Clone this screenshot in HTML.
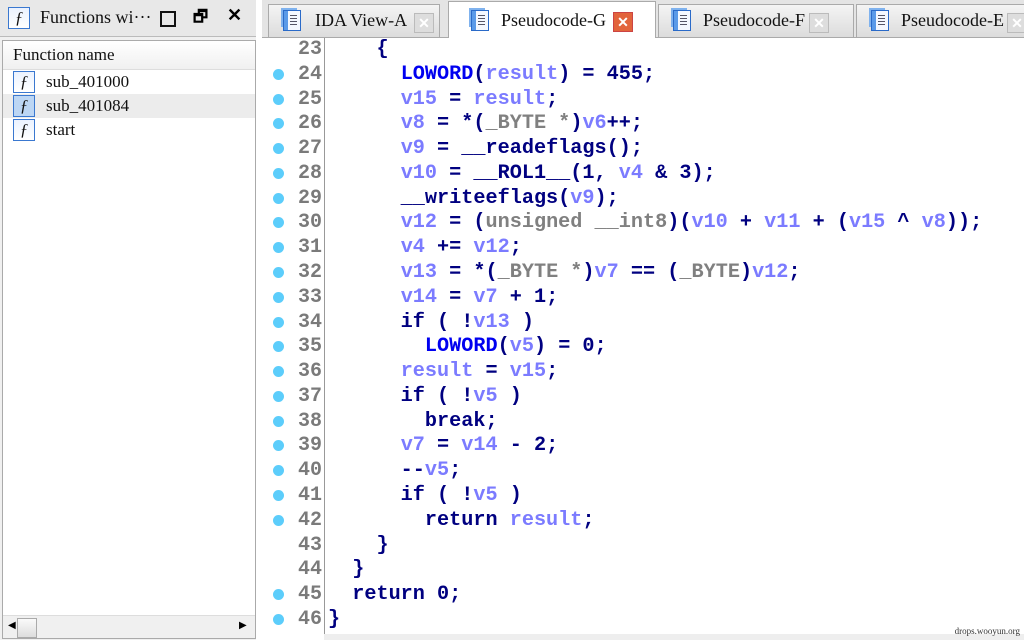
<!DOCTYPE html><html><head><style>
body{margin:0;width:1024px;height:640px;overflow:hidden;background:#fff;position:relative;font-family:"Liberation Serif",serif}
.left{position:absolute;left:0;top:0;width:256px;height:640px;background:#f0f0f0}
.title{position:absolute;left:0;top:0;width:256px;height:36px;background:#e8e8e8;border-bottom:1px solid #bbb}
.fi{position:absolute;width:20px;height:20px;border:1px solid #3a78d0;background:linear-gradient(#eaf2ff,#fff);font:italic 17px "Liberation Serif",serif;text-align:center;line-height:20px;color:#111}
.list{position:absolute;left:2px;top:40px;width:252px;height:597px;background:#fff;border:1px solid #aaa}
.list .hd{height:28px;background:linear-gradient(#fff,#f0f0f0);border-bottom:1px solid #ddd;font-size:17px;line-height:28px;padding-left:10px;color:#111}
.row{position:relative;height:24px;font-size:17px;line-height:24px;padding-left:43px;color:#111}
.tabs{position:absolute;left:262px;top:0;width:762px;height:37px;background:#e4e4e4;border-bottom:1px solid #aaa}
.tab{position:absolute;top:4px;height:32px;background:linear-gradient(#f4f4f4,#dcdcdc);border:1px solid #aaa;font-size:18px;line-height:30px;color:#111}
.tab.a{background:#fff;top:1px;height:36px;border-bottom:none}
.ti{position:absolute;top:5px;width:16px;height:19px;border:1px solid #2a6ac8;background:linear-gradient(90deg,#5a9ae8 0 4px,#f4f8ff 4px);box-shadow:-3px -3px 0 -1px #7fb2ee}
.ti:after{content:"";position:absolute;left:6px;top:4px;width:7px;height:10px;background:repeating-linear-gradient(#556 0 1px,transparent 1px 3px)}
.x{position:absolute;top:8px;width:18px;height:18px;background:#ddd;border:1px solid #bbb;color:#fff;font:bold 14px "Liberation Sans";text-align:center;line-height:18px}
.code{position:absolute;left:262px;top:38px;width:762px;height:596px;background:#fff}
.gut{position:absolute;left:262px;top:38px;width:62px;height:596px;border-right:1px solid #999}
.ln{position:absolute;left:262px;width:60px;height:24.78px;font:bold 20px/24.78px "Liberation Mono",monospace;color:#7a7a7a;text-align:right}
.dot{position:absolute;left:273px;width:11px;height:11px;border-radius:50%;background:#5ccdfb}
.cl{position:absolute;left:328px;white-space:pre;font:bold 20.2px/24.78px "Liberation Mono",monospace;color:#000080}
.v{color:#7b7bff}.f{color:#0000f0}.g{color:#808080}
</style></head><body>
<div class="left">
<div class="title"><div class="fi" style="left:8px;top:7px">ƒ</div>
<span style="position:absolute;left:40px;top:7px;font-size:18px;color:#111">Functions wi···</span>
<div style="position:absolute;left:160px;top:11px;width:12px;height:12px;border:2px solid #111"></div>
<span style="position:absolute;left:193px;top:6px;font:bold 16px 'Liberation Sans'">🗗</span>
<span style="position:absolute;left:227px;top:5px;font:bold 18px 'Liberation Sans'">✕</span></div>
<div class="list"><div class="hd">Function name</div>
<div class="row"><div class="fi" style="left:10px;top:1px">ƒ</div>sub_401000</div>
<div class="row" style="background:#ececec"><div class="fi" style="left:10px;top:1px;background:#bcd6f4">ƒ</div>sub_401084</div>
<div class="row"><div class="fi" style="left:10px;top:1px">ƒ</div>start</div>
<div style="position:absolute;left:0;bottom:0;width:252px;height:22px;background:#f0f0f0;border-top:1px solid #ddd">
<span style="position:absolute;left:5px;top:4px;font-size:10px">◀</span>
<div style="position:absolute;left:14px;top:2px;width:18px;height:18px;border:1px solid #aaa;background:linear-gradient(#fafafa,#ddd)"></div>
<span style="position:absolute;left:236px;top:4px;font-size:10px">▶</span></div></div>
</div>
<div class="tabs">
<div class="tab" style="left:6px;width:170px"><div class="ti" style="left:14px"></div><span style="position:absolute;left:46px">IDA View-A</span><div class="x" style="left:145px">✕</div></div>
<div class="tab a" style="left:186px;width:206px"><div class="ti" style="left:22px;top:8px"></div><span style="position:absolute;left:52px;top:3px">Pseudocode-G</span><div class="x" style="left:164px;top:10px;background:#e2643c;border-color:#c44">✕</div></div>
<div class="tab" style="left:396px;width:194px"><div class="ti" style="left:14px"></div><span style="position:absolute;left:44px">Pseudocode-F</span><div class="x" style="left:150px">✕</div></div>
<div class="tab" style="left:594px;width:170px"><div class="ti" style="left:14px"></div><span style="position:absolute;left:44px">Pseudocode-E</span><div class="x" style="left:150px">✕</div></div>
</div>
<div class="code"></div><div class="gut"></div>
<div id="c"></div>
<div style="position:absolute;left:324px;top:634px;width:700px;height:6px;background:#eee"></div>
<div style="position:absolute;right:4px;top:626px;font-size:9px;color:#333">drops.wooyun.org</div>
<script>
const L=[
'    {',
'      <span class=f>LOWORD</span>(<span class=v>result</span>) = 455;',
'      <span class=v>v15</span> = <span class=v>result</span>;',
'      <span class=v>v8</span> = *(<span class=g>_BYTE *</span>)<span class=v>v6</span>++;',
'      <span class=v>v9</span> = __readeflags();',
'      <span class=v>v10</span> = __ROL1__(1, <span class=v>v4</span> &amp; 3);',
'      __writeeflags(<span class=v>v9</span>);',
'      <span class=v>v12</span> = (<span class=g>unsigned __int8</span>)(<span class=v>v10</span> + <span class=v>v11</span> + (<span class=v>v15</span> ^ <span class=v>v8</span>));',
'      <span class=v>v4</span> += <span class=v>v12</span>;',
'      <span class=v>v13</span> = *(<span class=g>_BYTE *</span>)<span class=v>v7</span> == (<span class=g>_BYTE</span>)<span class=v>v12</span>;',
'      <span class=v>v14</span> = <span class=v>v7</span> + 1;',
'      if ( !<span class=v>v13</span> )',
'        <span class=f>LOWORD</span>(<span class=v>v5</span>) = 0;',
'      <span class=v>result</span> = <span class=v>v15</span>;',
'      if ( !<span class=v>v5</span> )',
'        break;',
'      <span class=v>v7</span> = <span class=v>v14</span> - 2;',
'      --<span class=v>v5</span>;',
'      if ( !<span class=v>v5</span> )',
'        return <span class=v>result</span>;',
'    }',
'  }',
'  return 0;',
'}'];
let h='';
L.forEach((s,i)=>{const t=38+i*24.78,n=23+i;
h+=`<div class="ln" style="top:${t}px">${n}</div>`;
if(![23,43,44].includes(n))h+=`<div class="dot" style="top:${t+6}px"></div>`;
h+=`<div class="cl" style="top:${t}px">${s}</div>`;});
document.getElementById('c').innerHTML=h;
</script>
</body></html>
